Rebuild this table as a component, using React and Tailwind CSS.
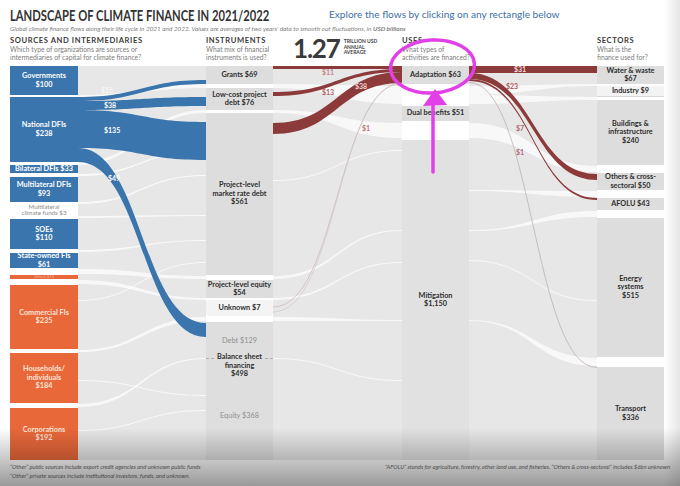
import React from 'react';

// sankey band between two columns: left edge a0..a1, right edge b0..b1
const band = (x0, a0, a1, x1, b0, b1) => {
  const m = (x0 + x1) / 2;
  return `M${x0},${a0} C${m},${a0} ${m},${b0} ${x1},${b0} L${x1},${b1} C${m},${b1} ${m},${a1} ${x0},${a1} Z`;
};

const thread = (x0, a, x1, b) => {
  const m = (x0 + x1) / 2;
  return `M${x0},${a} C${m},${a} ${m},${b} ${x1},${b}`;
};

const gaps = [
  [78, 206],
  [273, 402],
  [469, 597],
];

// white spaces between the grey flows
const whiteBands = [
  [78, 95, 97, 206, 84, 88],
  [78, 162, 165, 206, 110, 113],
  [78, 174, 176, 206, 150, 151],
  [78, 202, 204, 206, 175, 176],
  [78, 216, 218, 206, 215, 216],
  [78, 250, 252, 206, 240, 241],
  [78, 269, 274, 206, 276, 279],
  [78, 280, 284, 206, 298, 300],
  [78, 300, 301, 206, 262, 263],
  [78, 350, 352, 206, 317, 321],
  [78, 380, 381, 206, 395, 396],
  [78, 404, 407, 206, 358, 359],
  [78, 430, 431, 206, 410, 411],
  [273, 84, 88, 402, 86, 104],
  [273, 110, 113, 402, 123, 138],
  [273, 180, 181, 402, 150, 151],
  [273, 276, 279, 402, 230, 231],
  [273, 298, 300, 402, 262, 263],
  [273, 317, 321, 402, 320, 321],
  [273, 358, 359, 402, 380, 381],
  [469, 86, 95, 597, 84, 86],
  [469, 95, 104, 597, 97, 100],
  [469, 123, 138, 597, 166, 172],
  [469, 190, 191, 597, 191, 197],
  [469, 230, 231, 597, 211, 217],
  [469, 260, 261, 597, 300, 301],
  [469, 320, 321, 597, 358, 366],
];

const blueBands = [
  [78, 97, 101, 206, 80, 84],
  [78, 101, 110, 206, 97, 106],
  [78, 110, 148, 206, 122, 160],
  [78, 148, 162, 206, 323, 337],
];

const redBands = [
  [273, 66, 69, 402, 66, 69],
  [273, 92, 96, 402, 69, 72],
  [273, 123, 134, 402, 72, 83],
  [469, 66, 73, 597, 66, 73],
  [469, 73, 79, 597, 174, 180],
  [469, 79, 81, 597, 198, 200],
];

const flowLabels = [
  { x: 101, y: 93, t: '$15', c: '#f7f7f7' },
  { x: 104, y: 108, t: '$38', c: '#ffffff' },
  { x: 104, y: 133, t: '$135', c: '#ffffff' },
  { x: 108, y: 181, t: '$49', c: '#ffffff' },
  { x: 322, y: 75, t: '$11', c: '#c48888' },
  { x: 322, y: 95, t: '$13', c: '#b06464' },
  { x: 355, y: 89, t: '$38', c: '#f1d3d3' },
  { x: 362, y: 131, t: '$1', c: '#c07080' },
  { x: 514, y: 72, t: '$31', c: '#f4dede' },
  { x: 506, y: 89, t: '$23', c: '#b05a5a' },
  { x: 516, y: 131, t: '$7', c: '#b06a7a' },
  { x: 516, y: 155, t: '$1', c: '#b06a7a' },
];

const Flows = () => (
  <svg className="absolute inset-0" width="654" height="394" viewBox="10 66 654 394">
    {gaps.map(([a, b]) => (
      <rect key={a} x={a} y={66} width={b - a} height={394} fill="#e7e7e7" />
    ))}
    {whiteBands.map((d, i) => (
      <path key={i} d={band(...d)} fill="#ffffff" opacity="0.7" />
    ))}
    {blueBands.map((d, i) => (
      <path key={i} d={band(...d)} fill="#3b75ad" />
    ))}
    {redBands.map((d, i) => (
      <path key={i} d={band(...d)} fill="#8c3a3a" />
    ))}
    <path d={thread(273, 307, 402, 83.5)} stroke="#d0b0b4" strokeWidth="0.7" fill="none" />
    <path d={thread(273, 312, 402, 83)} stroke="#c6c6c6" strokeWidth="0.6" fill="none" />
    <path d={thread(469, 82.5, 597, 367.5)} stroke="#b9a9a9" strokeWidth="0.7" fill="none" />
    {flowLabels.map((l, i) => (
      <text key={i} x={l.x} y={l.y} fill={l.c} fontSize="7" fontWeight="700" fontFamily="Lato, sans-serif">
        {l.t}
      </text>
    ))}
  </svg>
);

const Src = ({ cls = '', children }) => (
  <div className={`flex shrink-0 flex-col items-center justify-center bg-[#3b75ad] text-center text-[7.3px] font-bold leading-[8.5px] text-white ${cls}`}>
    {children}
  </div>
);

const Org = ({ cls = '', children }) => (
  <div className={`flex shrink-0 flex-col items-center justify-center bg-[#e8683a] text-center text-[7.3px] font-bold leading-[8.5px] text-[#fbe3d8] ${cls}`}>
    {children}
  </div>
);

const Gray = ({ cls = '', children }) => (
  <div className={`flex shrink-0 flex-col items-center justify-center bg-[#dddddd] text-center text-[7.3px] font-bold leading-[8.5px] text-[#2e2e2e] ${cls}`}>
    {children}
  </div>
);

const Header = ({ title, children }) => (
  <div>
    <div className="text-[7.6px] font-bold leading-[9px] tracking-[0.6px] text-[#3a3a3a]">{title}</div>
    <div className="mt-[1px] text-[6.8px] leading-[7.8px] text-[#7d7d7d]">{children}</div>
  </div>
);

export default function App() {
  return (
    <div className="relative h-[486px] w-[680px] overflow-hidden bg-white font-['Lato',sans-serif] text-[#333]">
      <div className="px-[10px]">
        <div className="flex h-[25px] items-end pb-[2px]">
          <div className="w-[319px] shrink-0">
            <h1 className="origin-left scale-x-[0.7] whitespace-nowrap text-[16px] font-bold leading-[17px] text-[#333]">
              LANDSCAPE OF CLIMATE FINANCE IN 2021/2022
            </h1>
          </div>
          <div className="mb-[3px] whitespace-nowrap text-[10.1px] leading-[12px] text-[#3d70a6]">
            Explore the flows by clicking on any rectangle below
          </div>
        </div>
        <div className="h-[8px] whitespace-nowrap text-[6.4px] italic leading-[8px] text-[#808080]">
          Global climate finance flows along their life cycle in 2021 and 2022. Values are averages of two years' data to smooth out fluctuations, in{' '}
          <span className="font-bold">USD billions</span>
        </div>

        <div className="grid h-[33px] grid-cols-[196px_196px_195px_67px] pt-[3px]">
          <Header title="SOURCES AND INTERMEDIARIES">
            Which type of organizations are sources or
            <br />
            intermediaries of capital for climate finance?
          </Header>
          <div className="flex">
            <div className="w-[87px] shrink-0">
              <Header title="INSTRUMENTS">
                What mix of financial
                <br />
                instruments is used?
              </Header>
            </div>
            <div className="flex items-start">
              <div className="-mt-[1px] text-[26px] font-bold leading-[27px] tracking-[-1.2px] text-[#3a3a3a]">1.27</div>
              <div className="ml-[4px] mt-[3px] text-[5px] font-bold leading-[5.5px] text-[#444]">
                TRILLION USD
                <br />
                ANNUAL
                <br />
                AVERAGE
              </div>
            </div>
          </div>
          <Header title="USES">
            What types of
            <br />
            activities are financed?
          </Header>
          <div className="whitespace-nowrap">
            <Header title="SECTORS">
              What is the
              <br />
              finance used for?
            </Header>
          </div>
        </div>

        <div className="relative h-[394px]">
          <Flows />
          <div className="relative grid h-full grid-cols-[68px_128px_67px_129px_67px_128px_67px]">
            <div className="flex flex-col">
              <Src cls="h-[29px]">
                Governments
                <br />
                $100
              </Src>
              <Src cls="mt-[2px] h-[65px]">
                National DFIs
                <br />
                $238
              </Src>
              <Src cls="mt-[3px] h-[8px] whitespace-nowrap">Bilateral DFIs $33</Src>
              <Src cls="mt-[4px] h-[25px]">
                Multilateral DFIs
                <br />
                $93
              </Src>
              <div className="mt-[2px] flex h-[11px] shrink-0 flex-col items-center justify-center text-center text-[6.2px] leading-[6px] text-[#8a8a8a]">
                <span>Multilateral</span>
                <span className="h-px w-full bg-[#3b75ad]" />
                <span>climate funds $3</span>
              </div>
              <Src cls="mt-[4px] h-[30px]">
                SOEs
                <br />
                $110
              </Src>
              <Src cls="mt-[4px] h-[15px]">
                State-owned FIs
                <br />
                $61
              </Src>
              <div className="mt-[7px] flex h-[4px] shrink-0 items-center justify-center bg-[#e8683a] text-[4px] leading-[4px] text-[#f7bca4]">
                Others $15
              </div>
              <Org cls="mt-[6px] h-[64px]">
                Commercial FIs
                <br />
                $235
              </Org>
              <Org cls="mt-[4px] h-[50px]">
                Households/
                <br />
                individuals
                <br />
                $184
              </Org>
              <Org cls="mt-[5px] h-[52px]">
                Corporations
                <br />
                $192
              </Org>
            </div>

            <div />

            <div className="flex flex-col">
              <Gray cls="h-[18px]">Grants $69</Gray>
              <Gray cls="mt-[4px] h-[22px]">
                Low-cost project
                <br />
                debt $76
              </Gray>
              <Gray cls="mt-[3px] h-[162px]">
                Project-level
                <br />
                market rate debt
                <br />
                $561
              </Gray>
              <Gray cls="mt-[5px] h-[18px] whitespace-nowrap">
                Project-level equity
                <br />
                $54
              </Gray>
              <Gray cls="mt-[2px] h-[16px] rounded-[3px] bg-[#f4f4f4]">Unknown $7</Gray>
              <div className="mt-[6px] flex h-[138px] shrink-0 flex-col bg-[#dedede] text-center text-[7.3px] leading-[8.5px]">
                <div className="flex h-[36px] items-center justify-center pt-[2px] text-[#8f8f8f]">Debt $129</div>
                <div className="flex flex-1 flex-col items-center border-t border-dashed border-[#b0b0b0]">
                  <div className="-mt-[6px] bg-[#dedede] px-[2px] font-bold text-[#2e2e2e]">
                    Balance sheet
                    <br />
                    financing
                    <br />
                    $498
                  </div>
                  <div className="flex flex-1 items-center pb-[6px] text-[#8f8f8f]">Equity $368</div>
                </div>
              </div>
            </div>

            <div />

            <div className="flex flex-col">
              <Gray cls="h-[18px]">Adaptation $63</Gray>
              <Gray cls="mt-[22px] h-[15px] whitespace-nowrap">Dual benefits $51</Gray>
              <Gray cls="mt-[19px] h-[320px] bg-[#e1e1e1]">
                Mitigation
                <br />
                $1,150
              </Gray>
            </div>

            <div />

            <div className="flex flex-col">
              <Gray cls="h-[18px]">
                Water &amp; waste
                <br />
                $67
              </Gray>
              <Gray cls="mt-[2px] h-[11px] border-b border-[#d4d4d4] bg-[#f3f3f3]">Industry $9</Gray>
              <Gray cls="mt-[3px] h-[65px]">
                Buildings &amp;
                <br />
                infrastructure
                <br />
                $240
              </Gray>
              <Gray cls="mt-[8px] h-[17px]">
                Others &amp; cross-
                <br />
                sectoral $50
              </Gray>
              <Gray cls="mt-[8px] h-[12px]">AFOLU $43</Gray>
              <Gray cls="mt-[8px] h-[139px]">
                Energy
                <br />
                systems
                <br />
                $515
              </Gray>
              <Gray cls="mt-[10px] h-[93px]">
                Transport
                <br />
                $336
              </Gray>
            </div>
          </div>
        </div>

        <div className="flex justify-between pt-[2px] text-[5.8px] italic leading-[9px] text-[#6e6e6e]">
          <div>
            “Other” public sources include export credit agencies and unknown public funds
            <br />
            “Other” private sources include institutional investors, funds, and unknown.
          </div>
          <div>“AFOLU” stands for agriculture, forestry, other land use, and fisheries. “Others &amp; cross-sectoral” includes $6bn unknown</div>
        </div>
      </div>

      {/* video darkening at the bottom and right edge */}
      <div className="pointer-events-none absolute inset-x-0 bottom-0 h-[58px] bg-linear-to-b from-black/0 to-black/40" />
      <div className="pointer-events-none absolute inset-y-0 right-0 w-[16px] bg-linear-to-r from-black/0 to-black/10" />

      {/* hand-drawn annotation */}
      <svg className="pointer-events-none absolute inset-0" width="680" height="486" viewBox="0 0 680 486">
        <ellipse cx="432.5" cy="66.5" rx="42" ry="26.5" fill="none" stroke="#e23fe6" strokeWidth="3.5" transform="rotate(-4 432.5 66.5)" />
        <line x1="433" y1="104" x2="433" y2="172" stroke="#e23fe6" strokeWidth="3.5" strokeLinecap="round" />
        <polygon points="435,89 423,106 447,105" fill="#e23fe6" />
      </svg>
    </div>
  );
}
